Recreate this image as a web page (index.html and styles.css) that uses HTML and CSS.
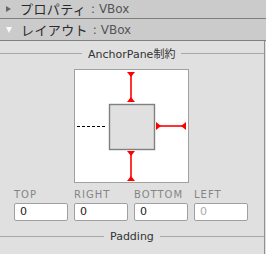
FILE: index.html
```html
<!DOCTYPE html>
<html>
<head>
<meta charset="utf-8">
<link rel="stylesheet" href="styles.css">
</head>
<body>
<div class="pane">
  <div class="hdr hdr-1"><span class="tri tri-right"></span><span class="ja">プロパティ</span><span class="lat"> : VBox</span></div>
  <div class="hdr hdr-2"><span class="tri tri-down"></span><span class="ja">レイアウト</span><span class="lat"> : VBox</span></div>
  <div class="content">
    <div class="sep sep-anchor"><span class="line"></span><span class="sep-text">AnchorPane<span class="ja">制約</span></span><span class="line"></span></div>
    <div class="anchor-wrap">
      <svg class="anchor" width="115" height="114" viewBox="0 0 115 114">
        <rect x="0.5" y="0.5" width="114" height="113" fill="#fff" stroke="#a0a0a0"/>
        <rect x="35.5" y="35.5" width="45" height="45" fill="#e0e0e0" stroke="#808080" stroke-width="1.4"/>
        <g stroke="#ff0000" stroke-width="1.6" fill="#ff0000">
          <line x1="57" y1="4" x2="57" y2="32"/>
          <line x1="57" y1="83" x2="57" y2="111"/>
          <line x1="83" y1="57" x2="111" y2="57"/>
        </g>
        <g fill="#ff0000">
          <polygon points="53,3 61,3 57,8"/>
          <polygon points="53,33 61,33 57,28"/>
          <polygon points="53,82 61,82 57,87"/>
          <polygon points="53,112 61,112 57,107"/>
          <polygon points="82,53 82,61 87,57"/>
          <polygon points="112,53 112,61 107,57"/>
        </g>
        <line x1="3" y1="57.5" x2="33" y2="57.5" stroke="#000" stroke-width="1" stroke-dasharray="3,2"/>
      </svg>
    </div>
    <div class="fields">
      <div class="field"><div class="lbl">TOP</div><div class="inp">0</div></div>
      <div class="field"><div class="lbl">RIGHT</div><div class="inp">0</div></div>
      <div class="field"><div class="lbl">BOTTOM</div><div class="inp">0</div></div>
      <div class="field"><div class="lbl">LEFT</div><div class="inp inp-disabled">0</div></div>
    </div>
    <div class="sep sep-padding"><span class="line"></span><span class="sep-text">Padding</span><span class="line"></span></div>
  </div>
</div>
</body>
</html>
```
FILE: styles.css
```css
html, body {
  margin: 0;
  padding: 0;
  background: #e0e0e0;
  overflow: hidden;
}
body {
  width: 266px;
  height: 254px;
  font-family: "DejaVu Sans", "Noto Sans CJK JP", sans-serif;
  color: #333;
}
.pane {
  width: 266px;
}
.hdr {
  display: flex;
  align-items: center;
  background: #cbcbcb;
  border-bottom: 1px solid #808080;
  font-size: 12px;
  line-height: 14px;
  color: #2a2a2a;
  padding-left: 6px;
  box-sizing: border-box;
}
.hdr-1 {
  height: 19px;
}
.hdr-2 {
  height: 22px;
}
.ja {
  font-family: "Noto Sans CJK JP", sans-serif;
}
.hdr .ja {
  font-size: 13px;
  letter-spacing: 0.4px;
}
.lat {
  white-space: pre;
  color: #555;
  padding-left: 1px;
}
.tri {
  display: inline-block;
  width: 0;
  height: 0;
}
.tri-right {
  border-top: 3.5px solid transparent;
  border-bottom: 3.5px solid transparent;
  border-left: 5px solid #666;
  margin-right: 9px;
}
.tri-down {
  border-left: 3.5px solid transparent;
  border-right: 3.5px solid transparent;
  border-top: 6px solid #fafafa;
  margin-right: 9px;
}
.content {
  width: 265px;
  border-right: 1px solid #909090;
  box-sizing: border-box;
  background: #e0e0e0;
  height: 213px;
  padding-top: 5px;
}
.sep {
  display: flex;
  align-items: center;
  gap: 6px;
  height: 14px;
}
.sep .line {
  flex: 1;
  height: 1px;
  background: #a8a8a8;
}
.sep-anchor .line:first-child {
  flex: 0 0 82px;
}
.sep-text {
  font-size: 11px;
  color: #333;
  white-space: nowrap;
}
.sep-text .ja {
  font-size: 11px;
  color: #333;
}
.sep-padding .line:first-child {
  flex: 0 0 104px;
}
.anchor-wrap {
  display: flex;
  padding-left: 74px;
  margin-top: 9px;
}
.anchor {
  display: block;
}
.fields {
  display: flex;
  gap: 6px;
  padding-left: 14px;
  margin-top: 6px;
}
.field {
  width: 54px;
}
.lbl {
  font-size: 10px;
  letter-spacing: 1px;
  color: #858585;
  height: 12px;
  line-height: 12px;
}
.inp {
  margin-top: 2px;
  height: 18px;
  box-sizing: border-box;
  border: 1px solid #a0a0a0;
  border-radius: 2px;
  background: #fff;
  font-size: 11px;
  line-height: 16px;
  padding-left: 5px;
  color: #222;
}
.inp-disabled {
  color: #aaa;
}
.sep-padding {
  margin-top: 8px;
}
```
